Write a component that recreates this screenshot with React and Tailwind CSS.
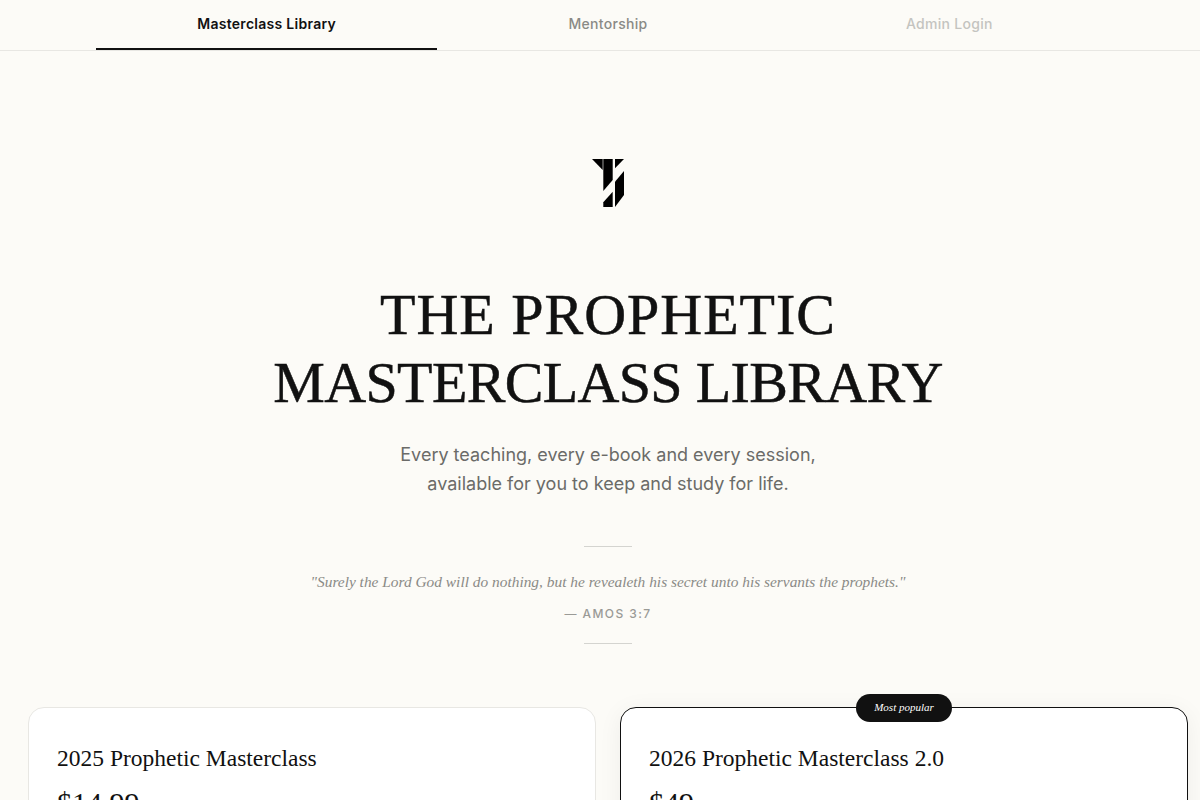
const serif = "font-['Liberation_Serif',serif]";

const Logo = () => (
  <svg width="32" height="48" viewBox="0 0 32 48" fill="#000">
    <polygon points="0,0 10.7,0 10.7,11" />
    <polygon points="11.3,0 20.7,0 20.7,21 11.3,32" />
    <polygon points="20.7,32.7 20.7,48 11.3,48 11.3,43.3" />
    <polygon points="23,0 32,0 23,9.3" />
    <polygon points="32,12 32,36 23,48 23,22.7" />
  </svg>
);

const Tab = ({ label, className }) => (
  <a className={`flex-1 flex items-center justify-center h-[50px] text-sm font-medium tracking-[0.02em] border-b-2 ${className}`}>{label}</a>
);

export default function App() {
  return (
    <div className="w-full h-screen overflow-hidden bg-[#fcfbf7] text-[#111111] font-['Inter',sans-serif]">
      <nav className="border-b border-[#e8e7e3] h-[51px] pl-4">
        <div className="max-w-[1024px] mx-auto flex">
          <Tab label="Masterclass Library" className="text-[#111111] font-semibold border-[#111111]" />
          <Tab label="Mentorship" className="text-[#8a8a86] border-transparent" />
          <Tab label="Admin Login" className="text-[#c4c4c0] border-transparent" />
        </div>
      </nav>

      <main className="pl-4">
        <section className="flex flex-col items-center pt-[108px]">
          <Logo />
          <h1 className={`${serif} mt-[74px] text-[58px] leading-[68px] text-center [-webkit-text-stroke:0.5px_#111111]`}>
            <span className="tracking-[1px]">THE PROPHETIC</span><br />
            <span className="tracking-[-0.65px]">MASTERCLASS LIBRARY</span>
          </h1>
          <p className="mt-[23px] text-lg leading-[29px] text-center text-[#6b6b68]">
            Every teaching, every e-book and every session,<br />available for you to keep and study for life.
          </p>
          <div className="mt-[48px] w-12 h-px bg-[#d4d4d0]" />
          <p className={`${serif} italic mt-6 text-[15.4px] leading-[22px] text-[#8a8a86]`}>
            "Surely the Lord God will do nothing, but he revealeth his secret unto his servants the prophets."
          </p>
          <p className="mt-[13px] text-xs leading-4 font-medium tracking-[0.12em] text-[#9a9a96]">— AMOS 3:7</p>
          <div className="mt-[21px] w-12 h-px bg-[#d4d4d0]" />
        </section>

        <section className="grid grid-cols-2 gap-6 px-3 mt-[63px]">
          <div className="bg-white border border-[#e8e7e3] rounded-2xl px-7 pt-[34px] h-[300px]">
            <h2 className={`${serif} text-[23.5px] leading-8`}>2025 Prophetic Masterclass</h2>
            <p className={`${serif} mt-[9px] text-[30px] leading-10`}>$14.99</p>
          </div>
          <div className="relative bg-white border border-[#111111] rounded-2xl px-7 pt-[34px] h-[300px] shadow-[0_4px_24px_rgba(0,0,0,0.06)]">
            <span className={`${serif} italic absolute -top-[14px] left-1/2 -translate-x-1/2 h-7 w-24 pb-px rounded-full bg-[#111111] text-white text-[11px] flex items-center justify-center`}>
              Most popular
            </span>
            <h2 className={`${serif} text-[23.5px] leading-8`}>2026 Prophetic Masterclass 2.0</h2>
            <p className={`${serif} mt-[9px] text-[30px] leading-10 flex items-baseline gap-[30px]`}>
              $49<span className="text-[#c4c4c0] text-lg">/</span>
            </p>
          </div>
        </section>
      </main>
    </div>
  );
}
